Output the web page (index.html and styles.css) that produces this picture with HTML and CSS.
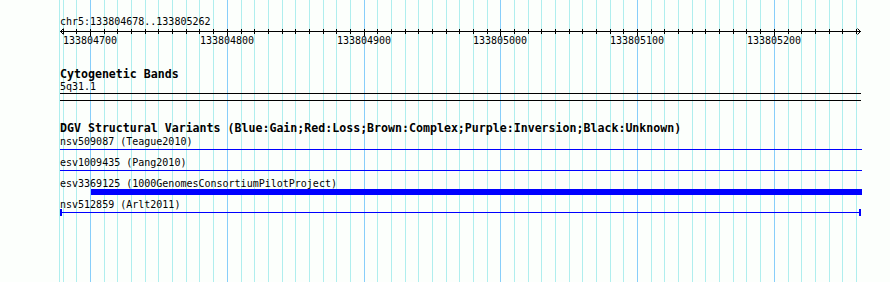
FILE: index.html
```html
<!DOCTYPE html>
<html lang="en">
<head>
    <meta charset="UTF-8">
    <title>chr5:133804678..133805262</title>
    <link rel="stylesheet" href="styles.css">
</head>
<body>
    <div class="panel">
        <svg class="grid" id="grid" width="890" height="282"></svg>

        <div class="tracks">
            <div class="ruler">
                <div class="ruler-title">chr5:133804678..133805262</div>
                <svg class="ruler-axis" id="axis" width="802" height="6"></svg>
                <div class="ruler-labels" id="labels"></div>
            </div>

            <div class="track">
                <div class="track-title">Cytogenetic Bands</div>
                <div class="feature-label">5q31.1</div>
                <div class="band"></div>
            </div>

            <div class="track">
                <div class="track-title dgv-title">DGV Structural Variants (Blue:Gain;Red:Loss;Brown:Complex;Purple:Inversion;Black:Unknown)</div>

                <div class="feature">
                    <div class="feature-label">nsv509087 (Teague2010)</div>
                    <div class="glyph"><div class="span-line" style="width: 802px"></div></div>
                </div>
                <div class="feature">
                    <div class="feature-label">esv1009435 (Pang2010)</div>
                    <div class="glyph"><div class="span-line" style="width: 802px"></div></div>
                </div>
                <div class="feature">
                    <div class="feature-label">esv3369125 (1000GenomesConsortiumPilotProject)</div>
                    <div class="glyph"><div class="span-bar" style="margin-left: 31px; width: 771px"></div></div>
                </div>
                <div class="feature">
                    <div class="feature-label">nsv512859 (Arlt2011)</div>
                    <div class="glyph"><div class="span-capped" style="width: 801px"></div></div>
                </div>
            </div>
        </div>
    </div>

    <script>
        const SVG_NS = 'http://www.w3.org/2000/svg';
        const viewStart = 133804678;
        const viewEnd = 133805262;
        const left = 60;
        const width = 800;
        const scale = width / (viewEnd - viewStart + 1);

        function xPos(bp) {
            return Math.round(left + (bp - viewStart) * scale);
        }

        function addRect(svg, x, y, w, h, fill) {
            const r = document.createElementNS(SVG_NS, 'rect');
            r.setAttribute('x', x);
            r.setAttribute('y', y);
            r.setAttribute('width', w);
            r.setAttribute('height', h);
            r.setAttribute('fill', fill);
            svg.appendChild(r);
        }

        function drawGrid() {
            const grid = document.getElementById('grid');
            addRect(grid, 59, 0, 1, 282, '#afeeee');
            for (let bp = 133804680; bp <= 133805260; bp += 10) {
                const major = bp % 100 === 0;
                addRect(grid, xPos(bp), 0, 1, 282, major ? '#87cefa' : '#afeeee');
            }
        }

        function drawRuler() {
            const axis = document.getElementById('axis');
            const labels = document.getElementById('labels');

            addRect(axis, 0, 3, 801, 1, '#000');

            const arrows = document.createElementNS(SVG_NS, 'path');
            arrows.setAttribute('d', 'M3.5 0.5 L0.5 3.5 L3.5 6.5 M797.5 0.5 L800.5 3.5 L797.5 6.5');
            arrows.setAttribute('stroke', '#000');
            arrows.setAttribute('fill', 'none');
            axis.appendChild(arrows);

            for (let bp = 133804680; bp <= 133805260; bp += 10) {
                const x = xPos(bp) - left;
                const major = bp % 100 === 0;
                addRect(axis, x, 1, 1, major ? 7 : 5, '#000');

                if (major) {
                    const label = document.createElement('span');
                    label.className = 'tick-label';
                    label.textContent = bp;
                    label.style.left = x + 'px';
                    labels.appendChild(label);
                }
            }
        }

        drawGrid();
        drawRuler();
    </script>
</body>
</html>
```

FILE: styles.css
```css
* {
    margin: 0;
    padding: 0;
    box-sizing: border-box;
}

body {
    background-color: #fcfffc;
    font-family: "DejaVu Sans Mono", "Liberation Mono", monospace;
    font-size: 10px;
    color: #000;
}

.panel {
    position: relative;
    width: 890px;
    height: 282px;
    overflow: hidden;
}

.grid {
    position: absolute;
    top: 0;
    left: 0;
}

.tracks {
    position: relative;
    width: 862px;
    padding: 15px 0 0 60px;
}

.ruler {
    margin-bottom: 21px;
}

.ruler-title {
    line-height: 13px;
}

.ruler-axis {
    display: block;
    overflow: visible;
}

.ruler-labels {
    position: relative;
    height: 13px;
    line-height: 13px;
}

.tick-label {
    position: absolute;
    top: 0;
    transform: translateX(-50%);
}

.track + .track {
    margin-top: 21px;
}

.track-title {
    font-size: 11.6px;
    font-weight: bold;
    line-height: 12px;
    white-space: nowrap;
}

.track-title.dgv-title {
    line-height: 13px;
}

.feature-label {
    line-height: 13px;
    white-space: nowrap;
}

.band {
    width: 801px;
    height: 8px;
    border-top: 1px solid #000;
    border-bottom: 1px solid #000;
}

.feature {
    padding-bottom: 3px;
}

.feature .feature-label {
    height: 11px;
}

.glyph {
    display: flow-root;
    height: 7px;
}

.span-line {
    height: 1px;
    margin-top: 3px;
    background-color: #00f;
}

.span-bar {
    height: 6px;
    margin-top: 1px;
    background-color: #00f;
}

.span-capped {
    height: 7px;
    border-left: 2px solid #00f;
    border-right: 2px solid #00f;
    background: linear-gradient(#00f, #00f) center / 100% 1px no-repeat;
}
```
